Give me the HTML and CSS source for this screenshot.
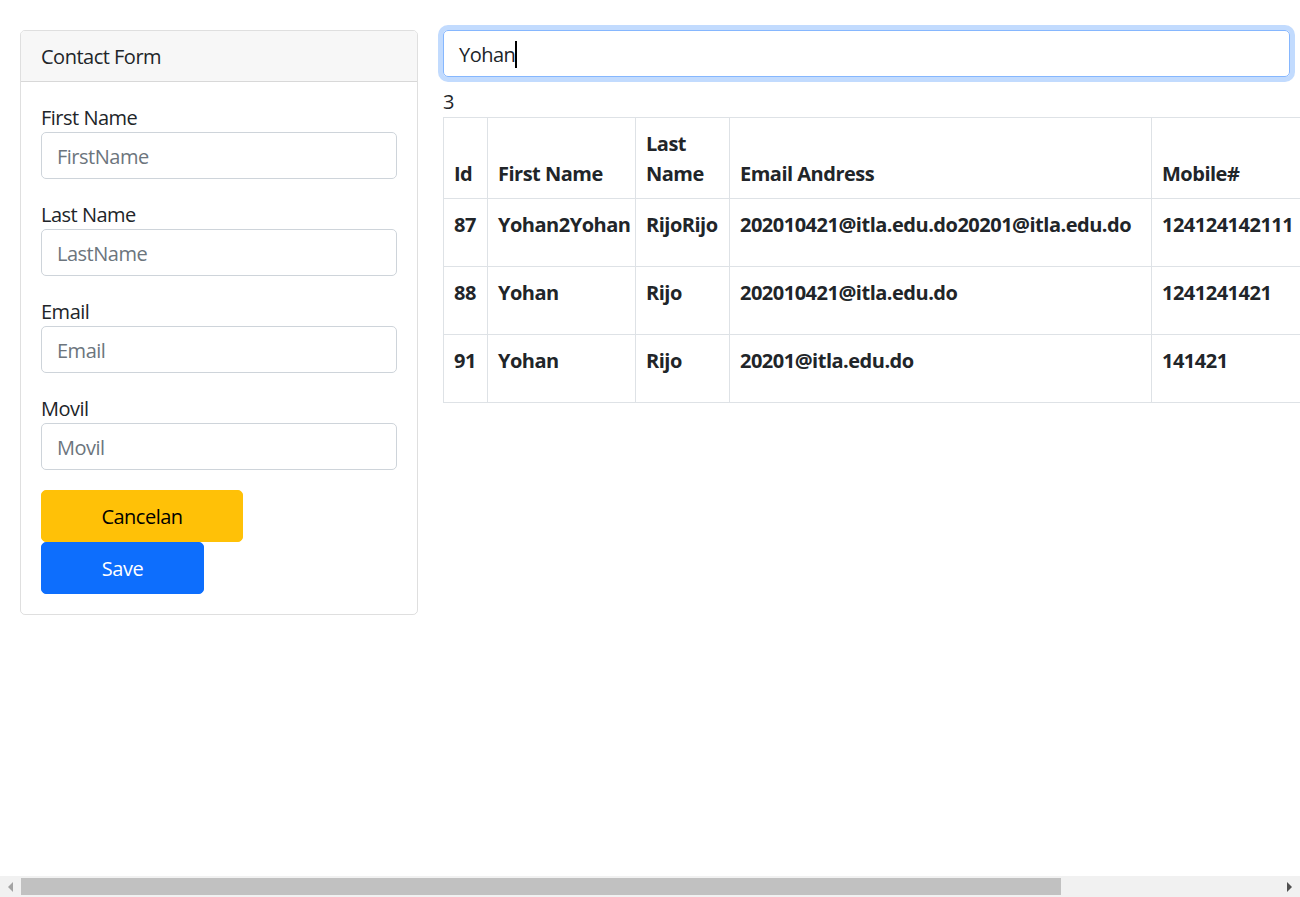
FILE: index.html
```html
<!DOCTYPE html>
<html lang="en">
<head>
<meta charset="utf-8">
<title>Contacts</title>
<link rel="stylesheet" href="styles.css">
</head>
<body>
<div class="layout">
  <div class="card">
    <div class="card-header">Contact Form</div>
    <form class="card-body">
      <div class="field">
        <label for="fn">First Name</label>
        <input id="fn" class="form-control" type="text" placeholder="FirstName">
      </div>
      <div class="field">
        <label for="ln">Last Name</label>
        <input id="ln" class="form-control" type="text" placeholder="LastName">
      </div>
      <div class="field">
        <label for="em">Email</label>
        <input id="em" class="form-control" type="text" placeholder="Email">
      </div>
      <div class="field">
        <label for="mv">Movil</label>
        <input id="mv" class="form-control" type="text" placeholder="Movil">
      </div>
      <div class="actions">
        <button type="button" class="btn btn-warning">Cancelan</button>
        <button type="button" class="btn btn-primary">Save</button>
      </div>
    </form>
  </div>
  <div class="results">
    <div class="search"><span class="search-text">Yohan</span><span class="caret"></span></div>
    <div class="count">3</div>
    <table class="table">
      <colgroup>
        <col class="c-id"><col class="c-first"><col class="c-last"><col class="c-email"><col class="c-mobile"><col class="c-extra">
      </colgroup>
      <thead>
        <tr><th>Id</th><th>First Name</th><th>Last Name</th><th>Email Andress</th><th>Mobile#</th><th></th></tr>
      </thead>
      <tbody>
        <tr><td>87</td><td>Yohan2Yohan</td><td>RijoRijo</td><td>202010421@itla.edu.do20201@itla.edu.do</td><td>124124142111</td><td></td></tr>
        <tr><td>88</td><td>Yohan</td><td>Rijo</td><td>202010421@itla.edu.do</td><td>1241241421</td><td></td></tr>
        <tr><td>91</td><td>Yohan</td><td>Rijo</td><td>20201@itla.edu.do</td><td>141421</td><td></td></tr>
      </tbody>
    </table>
  </div>
</div>
<div class="hscroll">
  <span class="arrow arrow-left"></span>
  <div class="thumb"></div>
  <span class="arrow arrow-right"></span>
</div>
</body>
</html>
```

FILE: styles.css
```css
html, body {
  margin: 0;
  padding: 0;
  height: 100%;
  overflow: hidden;
}
body {
  font-family: "Open Sans", "Noto Sans", sans-serif;
  font-size: 20px;
  line-height: 30px;
  letter-spacing: -0.5px;
  color: #212529;
  background: #fff;
}
.layout {
  display: flex;
  align-items: flex-start;
  gap: 25px;
  padding: 30px 0 0 20px;
}
.card {
  flex: none;
  width: 398px;
  box-sizing: border-box;
  border: 1px solid rgba(0,0,0,.125);
  border-radius: 5px;
  overflow: hidden;
}
.card-header {
  padding: 11px 20px 9px;
  background: #f7f7f7;
  border-bottom: 1px solid rgba(0,0,0,.125);
}
.card-body {
  padding: 20px;
  margin: 0;
}
.field {
  margin-bottom: 20px;
}
.field label {
  display: block;
  margin: 0;
  padding-top: 1px;
  line-height: 29px;
}
.form-control {
  display: block;
  width: 100%;
  box-sizing: border-box;
  height: 47px;
  padding: 8px 15px 6px;
  font: inherit;
  font-size: 20px;
  line-height: 30px;
  letter-spacing: -0.5px;
  color: #212529;
  border: 1px solid #ced4da;
  border-radius: 5px;
  background: #fff;
  outline: none;
}
.form-control::placeholder {
  color: #6c757d;
}
.actions {
  display: flex;
  flex-direction: column;
  align-items: flex-start;
}
.btn {
  height: 52px;
  border: 1px solid transparent;
  border-radius: 5px;
  font: inherit;
  font-size: 20px;
  line-height: 30px;
  letter-spacing: -0.5px;
  padding: 2px 0 0;
  text-align: center;
  cursor: pointer;
}
.btn-warning {
  width: 202px;
  background: #ffc107;
  border-color: #ffc107;
  color: #000;
}
.btn-primary {
  width: 163px;
  background: #0d6efd;
  border-color: #0d6efd;
  color: #fff;
}
.results {
  flex: none;
  width: 847px;
}
.search {
  box-sizing: border-box;
  height: 47px;
  padding: 9px 15px 7px;
  border: 1px solid #86b7fe;
  border-radius: 5px;
  box-shadow: 0 0 0 5px rgba(13,110,253,.25);
  display: flex;
  align-items: center;
}
.caret {
  display: inline-block;
  width: 2px;
  height: 27px;
  background: #000;
  margin-left: 0;
}
.count {
  margin-top: 10px;
  height: 30px;
}
.table {
  border-collapse: collapse;
  table-layout: fixed;
  width: 1129px;
  font-weight: 700;
}
.table th, .table td {
  border: 1px solid #dee2e6;
  padding: 11px 10px 9px;
  text-align: left;
  white-space: nowrap;
}
.table thead th {
  vertical-align: bottom;
  white-space: normal;
}
.table tbody td {
  vertical-align: top;
  height: 47px;
}
.c-id { width: 44px; }
.c-first { width: 148px; }
.c-last { width: 94px; }
.c-email { width: 422px; }
.c-mobile { width: 200px; }
.c-extra { width: 221px; }
.hscroll {
  position: fixed;
  left: 0;
  right: 0;
  bottom: 0;
  height: 21px;
  background: #f1f1f1;
}
.thumb {
  position: absolute;
  left: 21px;
  top: 2px;
  width: 1040px;
  height: 17px;
  background: #c1c1c1;
}
.arrow {
  position: absolute;
  top: 6px;
  width: 0;
  height: 0;
  border-top: 5px solid transparent;
  border-bottom: 5px solid transparent;
}
.arrow-left {
  left: 8px;
  border-right: 5px solid #a3a3a3;
}
.arrow-right {
  right: 8px;
  border-left: 5px solid #505050;
}
```
